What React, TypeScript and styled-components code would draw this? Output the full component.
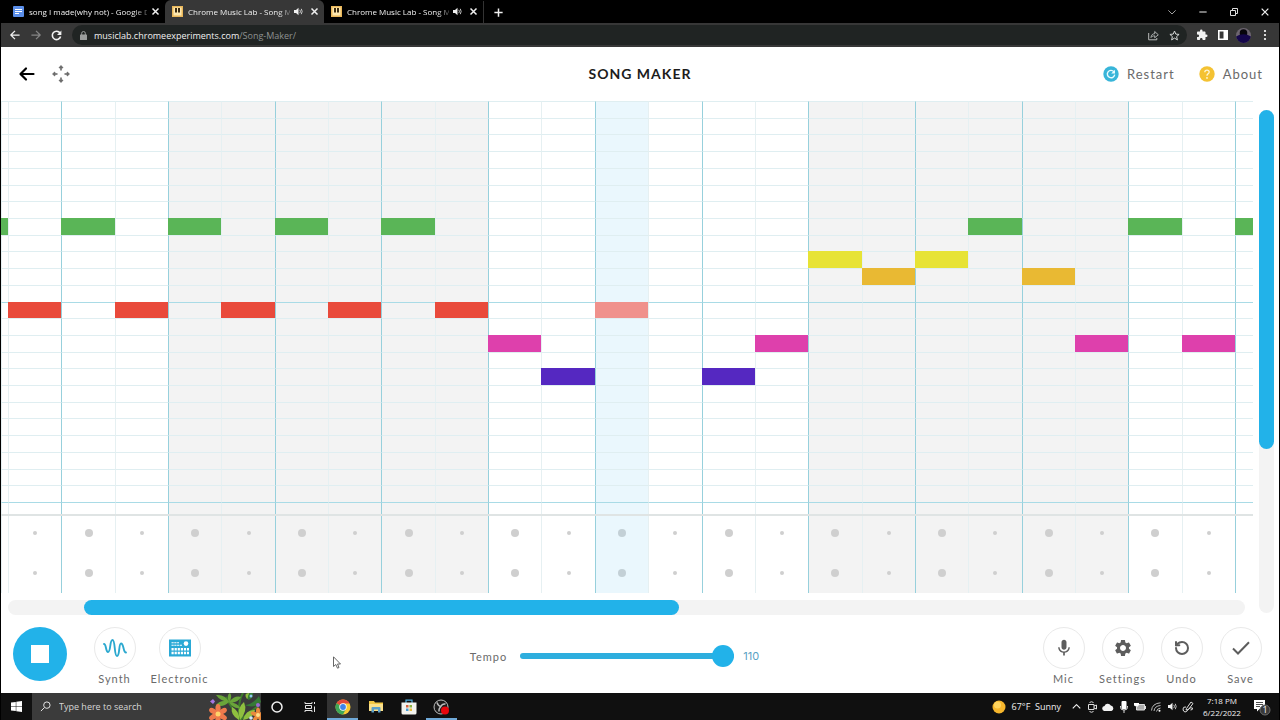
import React, { useState } from 'react';
import styled, { createGlobalStyle, css } from 'styled-components';
import { MdMic, MdSettings, MdExtension } from 'react-icons/md';
import { RotateCcw } from 'lucide-react';

const BLUE = '#22b2e9';

const GlobalStyle = createGlobalStyle`
  * { box-sizing: border-box; }
  body { margin: 0; background: #000; font-family: "Open Sans", sans-serif; }
  button { border: 0; padding: 0; margin: 0; background: none; color: inherit; font: inherit; letter-spacing: inherit; cursor: pointer; }
  a { color: inherit; text-decoration: none; }
  svg { display: block; flex: none; }
`;

const Screen = styled.div`
  display: flex;
  flex-direction: column;
  min-height: 100vh;
  background: #000;
`;

/* ---------- Browser frame ---------- */

const TabStrip = styled.header`
  display: flex;
  align-items: stretch;
  height: 23px;
  padding-left: 6px;
  background: #000;
  color: #f0f0f0;
  font-size: 8px;
`;

const Tab = styled.div<{ $active?: boolean }>`
  display: flex;
  align-items: center;
  width: 159px;
  padding: 0 2px 0 7px;
  border-radius: 6px 6px 0 0;
  background: ${p => (p.$active ? '#373737' : 'transparent')};
`;

const TabTitle = styled.span`
  flex: 1;
  min-width: 0;
  margin-left: 5px;
  white-space: nowrap;
  mask-image: linear-gradient(to right, #000 88%, rgba(0, 0, 0, 0.35));
`;

const TabButton = styled.button`
  display: grid;
  place-items: center;
  width: 16px;
  height: 20px;
`;

const NewTab = styled.button`
  display: grid;
  place-items: center;
  width: 30px;
  margin-top: 1px;
  border-left: 1px solid #333;
`;

const WindowButtons = styled.div`
  display: flex;
  align-items: center;
  margin-left: auto;
`;

const WindowButton = styled.button`
  display: grid;
  place-items: center;
  width: 31px;
  height: 20px;
`;

const Toolbar = styled.nav`
  display: flex;
  align-items: center;
  height: 24px;
  padding: 0 4px 0 3px;
  margin: 0 1px;
  background: #373737;
  color: #f2f2f2;
`;

const ToolButton = styled.button`
  display: grid;
  place-items: center;
  width: 21px;
  height: 22px;
  &:disabled { color: #858585; }
`;

const Omnibox = styled.div`
  display: flex;
  align-items: center;
  flex: 1;
  height: 20px;
  margin: 0 4px 0 5px;
  padding: 0 2px 0 8px;
  border-radius: 10px;
  background: #202423;
  font-size: 9px;
`;

const Url = styled.span`
  flex: 1;
  margin-left: 7px;
  color: #f0f0f0;
  span { color: #8e9291; }
`;

/* ---------- Song Maker ---------- */

const SongMaker = styled.main`
  display: flex;
  flex: 1;
  flex-direction: column;
  margin: 0 1px;
  background: #fff;
  color: #6a6a6a;
  font-family: Lato, sans-serif;
`;

const AppHeader = styled.header`
  display: grid;
  grid-template-columns: 1fr auto 1fr;
  align-items: center;
  height: 54px;
  padding: 0 16px;
`;

const HeaderGroup = styled.div<{ $end?: boolean }>`
  display: flex;
  align-items: center;
  gap: ${p => (p.$end ? '24px' : '14px')};
  justify-content: ${p => (p.$end ? 'flex-end' : 'flex-start')};
`;

const Title = styled.h1`
  margin: 0;
  color: #1c1c1c;
  font-size: 14px;
  font-weight: 700;
  line-height: 18px;
  letter-spacing: 1px;
`;

const HeaderAction = styled.button`
  display: flex;
  align-items: center;
  gap: 8px;
  font-size: 13px;
  line-height: 20px;
  letter-spacing: 1px;
`;

const Workspace = styled.div`
  display: flex;
  flex: 1;
`;

const Composer = styled.section`
  display: flex;
  flex: 1;
  flex-direction: column;
  min-width: 0;
`;

const Roll = styled.div`
  display: grid;
  grid-template-columns: 7px repeat(23, 1fr) 18px;
  flex: 1;
`;

const Column = styled.div<{ $shade: string }>`
  display: grid;
  grid-template-rows: repeat(24, minmax(14px, 1fr)) 12px;
  background: ${p => p.$shade};
`;

const Cell = styled.button<{ $beat: boolean; $octave: boolean; $note?: string }>`
  display: block;
  cursor: cell;
  border-top: 1px solid ${p => (p.$octave ? '#a9dbe6' : '#dfeef1')};
  border-left: 1px solid ${p => (p.$beat ? '#97d0dc' : '#e6f0f2')};
  ${p => p.$note && css`
    background: ${p.$note};
    border-color: ${p.$note};
  `}
`;

const Percussion = styled.div`
  display: grid;
  grid-template-columns: 7px repeat(23, 1fr) 18px;
  border-top: 2px solid #dfe4e4;
`;

const DrumColumn = styled.div<{ $shade: string; $beat: boolean }>`
  display: grid;
  grid-template-rows: 34px 40px;
  gap: 3px;
  overflow: hidden;
  background: ${p => p.$shade};
  border-left: 1px solid ${p => (p.$beat ? '#97d0dc' : '#e6f0f2')};
`;

const DrumCell = styled.button`
  display: grid;
  place-items: center;
`;

const Dot = styled.span<{ $big: boolean; $live: boolean }>`
  width: ${p => (p.$big ? 8 : 4)}px;
  height: ${p => (p.$big ? 8 : 4)}px;
  border-radius: 50%;
  background: ${p => (p.$live ? '#c3d0d6' : '#cfcfcf')};
`;

const HTrack = styled.div`
  display: grid;
  grid-template-columns: 76fr 595fr 566fr;
  height: 15px;
  margin: 7px 8px 6px 7px;
  border-radius: 8px;
  background: #f3f3f3;
`;

const VTrack = styled.div`
  display: grid;
  grid-template-rows: 339fr 164fr;
  width: 15px;
  margin: 9px 5px 8px 6px;
  border-radius: 8px;
  background: #f3f3f3;
`;

const Thumb = styled.div<{ $column?: number }>`
  grid-column: ${p => p.$column ?? 1};
  border-radius: 8px;
  background: ${BLUE};
`;

const Controls = styled.footer`
  display: grid;
  grid-template-columns: 1fr auto 1fr;
  height: 72px;
  padding: 0 9px 0 12px;
`;

const ControlGroup = styled.div<{ $end?: boolean }>`
  display: flex;
  align-items: flex-start;
  padding-top: 6px;
  justify-content: ${p => (p.$end ? 'flex-end' : 'flex-start')};
`;

const StopButton = styled.button`
  display: grid;
  place-items: center;
  width: 54px;
  height: 54px;
  margin-right: 15px;
  border-radius: 50%;
  background: ${BLUE};
  &::before { content: ''; width: 18px; height: 18px; background: #fff; }
`;

const RoundControl = styled.button<{ $width: number }>`
  display: flex;
  flex-direction: column;
  align-items: center;
  gap: 3px;
  width: ${p => p.$width}px;
  font-size: 11px;
  line-height: 14px;
  letter-spacing: 1px;
`;

const Ring = styled.span`
  display: grid;
  place-items: center;
  width: 42px;
  height: 42px;
  border: 1px solid #e9e9e9;
  border-radius: 50%;
  color: #5d5d5d;
`;

const TempoLabel = styled.label`
  display: flex;
  align-items: center;
  gap: 13px;
  margin-right: 54px;
  padding-bottom: 2px;
  font-size: 11px;
  letter-spacing: 1px;
`;

const TempoRange = styled.input`
  appearance: none;
  width: 214px;
  height: 22px;
  margin: 0;
  background: transparent;
  &::-webkit-slider-runnable-track {
    height: 6px;
    border-radius: 3px;
    background: #2eaede;
  }
  &::-webkit-slider-thumb {
    appearance: none;
    width: 22px;
    height: 22px;
    margin-top: -8px;
    border-radius: 50%;
    background: ${BLUE};
  }
`;

const TempoValue = styled.output`
  margin-left: -4px;
  color: #5aa2c4;
  font-family: Inter, sans-serif;
  letter-spacing: 0;
`;

const Pointer = styled.svg`
  position: absolute;
  left: 26%;
  bottom: 51px;
`;

/* ---------- Windows taskbar ---------- */

const Taskbar = styled.footer`
  display: flex;
  align-items: stretch;
  height: 27px;
  margin: 0 1px;
  background: #101010;
  color: #f1f1f1;
`;

const StartButton = styled.button`
  display: grid;
  place-items: center;
  width: 31px;
`;

const SearchBox = styled.label`
  display: flex;
  align-items: center;
  width: 229px;
  padding-left: 8px;
  background: #3b3b3b;
`;

const SearchInput = styled.input`
  flex: 1;
  min-width: 0;
  margin-left: 8px;
  padding: 0;
  border: 0;
  outline: 0;
  background: transparent;
  color: #fff;
  font: 9px "Open Sans", sans-serif;
  &::placeholder { color: #d6d6d6; opacity: 1; }
`;

const TaskButton = styled.button<{ $open?: boolean; $active?: boolean }>`
  display: grid;
  place-items: center;
  width: 31px;
  margin-right: 2px;
  background: ${p => (p.$active ? '#333' : 'transparent')};
  border-bottom: 2px solid ${p => (p.$open ? '#6fa9d8' : 'transparent')};
  border-top: 2px solid transparent;
`;

const Tray = styled.div`
  display: flex;
  align-items: center;
  margin-left: auto;
  font-size: 9px;
`;

const Weather = styled.button`
  display: flex;
  align-items: center;
  gap: 6px;
  margin-right: 7px;
  white-space: pre;
`;

const TrayButton = styled.button`
  display: grid;
  place-items: center;
  width: 16px;
  height: 24px;
`;

const Clock = styled.time`
  width: 46px;
  margin-left: 3px;
  font-size: 8px;
  line-height: 12px;
  text-align: center;
`;

const Notices = styled.button`
  display: grid;
  place-items: center;
  width: 34px;
  height: 27px;
`;

/* ---------- Icons ---------- */

const Line = ({ size, d, width = 2 }: { size: number; d: string; width?: number }) => (
  <svg width={size} height={size} viewBox="0 0 24 24" fill="none" stroke="currentColor"
    strokeWidth={width} strokeLinejoin="round" aria-hidden="true">
    <path d={d} />
  </svg>
);

const CLOSE = 'M4 4L20 20M20 4L4 20';
const LEFT = 'M23 12H2M12 2L2 12L12 22';
const RIGHT = 'M1 12H22M12 2L22 12L12 22';

const DocsIcon = () => (
  <svg width="11" height="11" viewBox="0 0 11 11"><rect width="11" height="11" rx="1" fill="#5b8fea" />
    <path d="M2 3.5H9M2 5.5H9M2 7.5H6" stroke="#fff" /></svg>
);

const LabIcon = () => (
  <svg width="11" height="11" viewBox="0 0 11 11"><rect width="11" height="11" fill="#e9b75a" />
    <rect x="1.500" y="1.500" width="8" height="8" fill="#ffe9b0" /><path d="M3 2H5V6.500H3zM6 2H8V6.500H6z" fill="#3a2a10" /></svg>
);

const SpeakerIcon = () => (
  <svg width="9" height="9" viewBox="0 0 9 9"><path d="M0 3H2L4.500 .8V8.200L2 6H0z" fill="currentColor" />
    <path d="M5.800 2.800Q7 4.500 5.800 6.200M7.300 1.800Q9 4.500 7.300 7.200" fill="none" stroke="currentColor" strokeWidth=".8" /></svg>
);

const ReloadIcon = () => (
  <svg width="11" height="11" viewBox="0 0 11 11"><path d="M9 3A4.2 4.2 0 1 0 9.6 6.5" fill="none" stroke="currentColor" strokeWidth="1.6" />
    <path d="M10.4 .5V5H6z" fill="currentColor" /></svg>
);

const LockIcon = () => (
  <svg width="7" height="9" viewBox="0 0 7 9"><rect y="3.5" width="7" height="5.5" rx=".6" fill="#9a9d9c" />
    <path d="M1.7 4V2.3a1.8 1.8 0 0 1 3.6 0V4" fill="none" stroke="#9a9d9c" /></svg>
);

const ShareIcon = () => (
  <svg width="11" height="11" viewBox="0 0 11 11" fill="none" stroke="#b9bcbb"><path d="M.7 3V9.8H8.8V8" />
    <path d="M3 7.5C3.2 4.8 4.7 3.8 6.7 3.7V1.5L10.3 4.8L6.7 7.8V5.8C5 5.8 4 6.3 3 7.5z" strokeWidth=".9" /></svg>
);

const StarIcon = () => (
  <svg width="11" height="11" viewBox="0 0 11 11" fill="none" stroke="#d5d8d7"><path d="M5.5 1L6.8 4.1L10.1 4.4L7.6 6.6L8.4 9.9L5.5 8.1L2.6 9.9L3.4 6.6L.9 4.4L4.2 4.1z" /></svg>
);

const SidePanelIcon = () => (
  <svg width="10" height="10" viewBox="0 0 10 10"><path d="M.8 .8H9.2V9.2H.8z" fill="none" stroke="#fff" strokeWidth="1.6" />
    <rect x="5.5" width="4.5" height="10" fill="#fff" /></svg>
);

const AvatarIcon = () => (
  <svg width="15" height="15" viewBox="0 0 15 15"><clipPath id="face"><circle cx="7.5" cy="7.5" r="7.5" /></clipPath>
    <g clipPath="url(#face)"><rect width="15" height="15" fill="#6d6570" /><circle cx="7.5" cy="5" r="3.8" fill="#07050b" />
      <path d="M0 15V8.5Q7.5 4 15 8.5V15z" fill="#14064a" /></g></svg>
);

const DotsIcon = () => (
  <svg width="4" height="12" viewBox="0 0 4 12" fill="#fff"><circle cx="2" cy="2" r="1.1" /><circle cx="2" cy="6" r="1.1" /><circle cx="2" cy="10" r="1.1" /></svg>
);

const RestoreIcon = () => (
  <svg width="8" height="8" viewBox="0 0 8 8" fill="none" stroke="#ddd"><path d="M.5 2.5H5.5V7.5H.5zM2.5 2.5V.5H7.5V5.5H5.5" /></svg>
);

const BackIcon = () => (
  <svg width="20" height="16" viewBox="0 0 20 16" fill="none" stroke="#000" strokeWidth="2.2" strokeLinecap="round" strokeLinejoin="round">
    <path d="M16.5 8H4M9 2.5L3.5 8L9 13.5" /></svg>
);

const MoveIcon = () => (
  <svg width="20" height="20" viewBox="0 0 20 20" fill="#6a6a6a" stroke="#6a6a6a" strokeWidth="1.6">
    {[0, 90, 180, 270].map(a => (
      <g key={a} transform={`rotate(${a} 10 10)`}><path d="M10 6.5V3" /><path d="M8 3.8L10 1.6L12 3.8z" strokeWidth="1" /></g>
    ))}
  </svg>
);

const RestartIcon = () => (
  <svg width="16" height="16" viewBox="0 0 16 16"><circle cx="8" cy="8" r="7.7" fill="#38b5d9" />
    <path d="M10.9 5.7A3.7 3.7 0 1 0 11.7 8.6" fill="none" stroke="#e9fbff" strokeWidth="1.4" /><path d="M12 3.8V7.6H8.2z" fill="#e9fbff" /></svg>
);

const AboutIcon = () => (
  <svg width="16" height="16" viewBox="0 0 16 16"><circle cx="8" cy="8" r="7.7" fill="#f4c232" />
    <path d="M5.8 6.2Q5.9 4.1 8 4.1T10.2 6.1Q10.2 7.2 9 7.9Q8 8.5 8 9.7" fill="none" stroke="#fff6d8" strokeWidth="1.3" /><circle cx="8" cy="11.9" r=".9" fill="#fff6d8" /></svg>
);

const SynthIcon = () => (
  <svg width="24" height="20" viewBox="0 0 24 20" fill="none" stroke="#2ba8cf" strokeWidth="1.9" strokeLinecap="round">
    <path d="M1 6C3.500 6 2.500 14 5 14C8 14 6.500 2 9.500 2C12.500 2 11 18 14 18C17 18 15.500 5.500 18 5.500C21 5.500 20 14.500 23 14.500" /></svg>
);

const ElectronicIcon = () => (
  <svg width="22" height="18" viewBox="0 0 22 18"><rect width="22" height="17" y=".5" fill="#2aa9d6" />
    <path d="M2.500 3.700H10M2.500 6.300H13" stroke="#fff" strokeWidth="1.100" strokeDasharray="2.200 .6" />
    <circle cx="17" cy="4.600" r="2.300" fill="#fff" />
    <path d="M2.500 10.300H20M2.500 14H20" stroke="#fff" strokeWidth="2.400" strokeDasharray="2.200 .9" /></svg>
);

const CheckIcon = () => (
  <svg width="18" height="14" viewBox="0 0 18 14" fill="none" stroke="currentColor" strokeWidth="2"><path d="M1 7.500L6 12.500L17 1.200" /></svg>
);

const WindowsIcon = () => (
  <svg width="11" height="11" viewBox="0 0 11 11" fill="#fff"><path d="M0 1.500L4.800 .9V5.200H0zM5.300 .8L11 0V5.200H5.300zM0 5.800H4.800V10.100L0 9.500zM5.300 5.800H11V11L5.300 10.200z" /></svg>
);

const GardenArt = () => (
  <svg width="54" height="27" viewBox="0 0 54 27">
    <path d="M19 4Q24 14 33 27M33 27Q30 10 36 0M33 27Q42 20 51 13" stroke="#3f7d2d" strokeWidth="2" fill="none" />
    <g fill="#6aa53a"><path d="M22 9Q13 8 9 2Q18 1 22 9zM22 9Q16 15 9 12Q14 6 22 9zM22 9Q19 2 23 0Q26 4 22 9zM22 9Q28 2 34 4Q30 11 22 9zM22 9Q31 10 33 15Q26 16 22 9z" /></g>
    <g fill="#8fbf3f"><path d="M32 27Q23 22 25 14Q33 18 32 27zM33 27Q29 15 37 9Q41 18 33 27zM36 27Q39 16 48 17Q47 25 36 27zM40 6Q36 0 42 0Q45 3 40 6z" /></g>
    <path d="M37 12Q45 12 52 3L54 9Q48 16 37 12zM46 0Q46 6 41 7Q40 2 43 0z" fill="#367a35" />
    <g transform="translate(11 21)" fill="#ee7a4c">
      {[0, 60, 120, 180, 240, 300].map(a => <ellipse key={a} cy="-5.500" rx="2.600" ry="4.500" transform={`rotate(${a})`} />)}
      <circle r="2.500" fill="#ffd36a" />
    </g>
    <g transform="translate(51 22)" fill="#e98a3d">
      {[0, 72, 144, 216, 288].map(a => <ellipse key={a} cy="-4" rx="2" ry="3.500" transform={`rotate(${a})`} />)}
      <circle r="2" fill="#ffe08a" />
    </g>
    <path d="M6 6L8 8.500L6 11L3 8.500z" fill="#a576e2" /><circle cx="44" cy="3" r="1.500" fill="#8fc7f2" />
    <circle cx="51" cy="12" r="2" fill="#9b6ad0" /><circle cx="44" cy="25" r="1.800" fill="#cfe8ff" />
  </svg>
);

const TaskViewIcon = () => (
  <svg width="12" height="12" viewBox="0 0 12 12" fill="none" stroke="#e4e4e4"><path d="M1 1V2.500H8V1M1 11V9.500H8V11M1.500 4.500H7.500V7.500H1.500zM10.500 1V3M10.500 5.500V11" /></svg>
);

const ChromeIcon = () => (
  <svg width="16" height="16" viewBox="0 0 16 16"><circle cx="8" cy="8" r="7.500" fill="#f9c932" />
    <path d="M8 8L1.500 4.250A7.500 7.500 0 0 1 14.500 4.250L14.500 4.500H8z" fill="#e3493a" />
    <path d="M8 8L1.500 4.250A7.500 7.500 0 0 0 8 15.500L11 9.800z" fill="#3ea757" />
    <circle cx="8" cy="8" r="3.700" fill="#fff" /><circle cx="8" cy="8" r="2.900" fill="#3f83ea" /></svg>
);

const FolderIcon = () => (
  <svg width="14" height="13" viewBox="0 0 14 13"><path d="M0 1H5L6 2.500H14V11H0z" fill="#f2c744" /><path d="M0 4H14V11H0z" fill="#fbe08a" />
    <path d="M2.500 12.500V8Q2.500 7 3.500 7H10.500Q11.500 7 11.500 8V12.500H9V9.500H5V12.500z" fill="#5c9fc9" /></svg>
);

const StoreIcon = () => (
  <svg width="16" height="16" viewBox="0 0 16 16"><path d="M5 4V1.200H11V4" fill="none" stroke="#53b1e0" strokeWidth="1.200" /><path d="M.5 3.500H15.500V14Q15.500 15.500 14 15.500H2Q.5 15.500 .5 14z" fill="#f3f3ee" />
    <path d="M5 6H7.500V8.500H5z" fill="#d8623f" /><path d="M8.500 6H11V8.500H8.500z" fill="#8ab33f" /><path d="M5 9.500H7.500V12H5z" fill="#4a9fd6" /><path d="M8.500 9.500H11V12H8.500z" fill="#e8ba3c" /></svg>
);

const ObsIcon = () => (
  <svg width="17" height="16" viewBox="0 0 17 16"><circle cx="8" cy="8" r="7" fill="#1b1b1b" stroke="#bdbdbd" />
    <path d="M4 3.500Q5 7 8 7.500M12.500 5Q9 4.500 8 7.500M8 7.500Q5.500 9.500 6 12.500" fill="none" stroke="#bdbdbd" strokeWidth="1.400" /><circle cx="12" cy="11.500" r="4" fill="#e8060c" /></svg>
);

const CameraIcon = () => (
  <svg width="9" height="12" viewBox="0 0 9 12" fill="none" stroke="#ddd"><path d="M1.500 1.500Q3.500 0 5.500 1.500M1.500 10.500Q3.500 12 5.500 10.500M.5 3.500H6V8.500H.5zM6 5L8.500 4V8L6 7" /></svg>
);

const CloudIcon = () => (
  <svg width="12" height="8" viewBox="0 0 12 8"><path d="M3 8A2.500 2.500 0 0 1 2.500 3A3.500 3.500 0 0 1 8.800 2.600A2.800 2.800 0 0 1 9.500 8z" fill="#f2f2f2" /></svg>
);

const TrayMicIcon = () => (
  <svg width="8" height="12" viewBox="0 0 8 12"><rect x="1.500" width="5" height="8" rx="1" fill="#fff" /><path d="M.5 5V6.500Q.5 9 4 9T7.500 6.500V5M4 9V12" fill="none" stroke="#ddd" /></svg>
);

const BatteryIcon = () => (
  <svg width="12" height="9" viewBox="0 0 12 9"><path d="M3 2.500H10.500V8H2.500V5" fill="#aaa" stroke="#ddd" /><path d="M0 1H5V3L3 5L0 3.500z" fill="#fff" /><path d="M11 4H12V7H11z" fill="#ddd" /></svg>
);

const WifiIcon = () => (
  <svg width="10" height="10" viewBox="0 0 10 10" fill="none" stroke="#bbb"><path d="M.5 8.500Q1 1.500 9.500 .8M3 9Q3.500 4 9.500 3.500M5.500 9.500Q6 6.500 9.500 6" /><circle cx="8.500" cy="8.700" r="1" fill="#fff" stroke="none" /></svg>
);

const PenIcon = () => (
  <svg width="12" height="12" viewBox="0 0 12 12" fill="none" stroke="#ddd"><path d="M4.500 7.500L9 1L11 2.500L6.500 8.500L4 9zM4 6Q1 5.500 1 8T3 11Q5 11 6 8.500Q8 6 10.500 7Q11 9 8.500 9" /></svg>
);

const NoticeIcon = () => (
  <svg width="18" height="18" viewBox="0 0 18 18"><path d="M1 2H12V11H6.500L4 13.500V11H1z" fill="#fff" /><path d="M3 4.500H10M3 6.500H10M3 8.500H7" stroke="#222" strokeWidth=".8" />
    <circle cx="12" cy="12" r="5" fill="#383838" stroke="#6b6b6b" /><text x="12" y="15" fontSize="9" textAnchor="middle" fill="#fff">1</text></svg>
);

/* ---------- Song data ---------- */

const ROWS = 25;
const COLUMNS = 25;
const PLAYHEAD = 12;
const PITCH = { green: '#5ab557', yellow: '#e7e335', orange: '#e9b933', red: '#e94a3b', pink: '#de40ac', purple: '#5528c1' };

const initialSong: Record<string, string> = {};
const place = (row: number, color: string, columns: number[]) =>
  columns.forEach(c => { initialSong[`${c}:${row}`] = color; });
place(7, PITCH.green, [0, 2, 4, 6, 8, 19, 22, 24]);
place(9, PITCH.yellow, [16, 18]);
place(10, PITCH.orange, [17, 20]);
place(12, PITCH.red, [1, 3, 5, 7, 9]);
place(12, '#f0918c', [PLAYHEAD]);
place(14, PITCH.pink, [10, 15, 21, 23]);
place(16, PITCH.purple, [11, 14]);

const rowColors = Object.values(PITCH);
const range = (n: number) => Array.from({ length: n }, (_, i) => i);
const isBeat = (c: number) => c % 2 === 0 && c > 0;
const shadeOf = (c: number) =>
  c === PLAYHEAD ? '#eaf7fd' : (c >= 4 && c <= 9) || (c >= 16 && c <= 21) ? '#f3f3f3' : '#fff';

export default function App() {
  const [song, setSong] = useState(initialSong);
  const [tempo, setTempo] = useState(110);

  const toggle = (key: string, row: number) =>
    setSong(s => {
      const next = { ...s };
      if (next[key]) delete next[key];
      else next[key] = rowColors[row % rowColors.length];
      return next;
    });

  return (
    <Screen>
      <GlobalStyle />
      <TabStrip>
        <Tab>
          <DocsIcon /><TabTitle>song I made(why not) - Google D</TabTitle>
          <TabButton aria-label="Close tab"><Line size={9} width={4} d={CLOSE} /></TabButton>
        </Tab>
        {[true, false].map(active => (
          <Tab key={String(active)} $active={active}>
            <LabIcon /><TabTitle>Chrome Music Lab - Song M</TabTitle>
            <TabButton aria-label="Mute tab"><SpeakerIcon /></TabButton>
            <TabButton aria-label="Close tab"><Line size={9} width={4} d={CLOSE} /></TabButton>
          </Tab>
        ))}
        <NewTab aria-label="New tab"><Line size={9} width={4} d="M12 1V23M1 12H23" /></NewTab>
        <WindowButtons>
          <WindowButton aria-label="Search tabs"><Line size={8} width={2} d="M1 7L12 18L23 7" /></WindowButton>
          <WindowButton aria-label="Minimize"><Line size={8} width={3} d="M1 12H23" /></WindowButton>
          <WindowButton aria-label="Restore"><RestoreIcon /></WindowButton>
          <WindowButton aria-label="Close"><Line size={10} width={3} d={CLOSE} /></WindowButton>
        </WindowButtons>
      </TabStrip>
      <Toolbar>
        <ToolButton aria-label="Back"><Line size={10} width={3} d={LEFT} /></ToolButton>
        <ToolButton aria-label="Forward" disabled><Line size={10} width={3} d={RIGHT} /></ToolButton>
        <ToolButton aria-label="Reload"><ReloadIcon /></ToolButton>
        <Omnibox>
          <LockIcon />
          <Url>musiclab.chromeexperiments.com<span>/Song-Maker/</span></Url>
          <ToolButton aria-label="Share"><ShareIcon /></ToolButton>
          <ToolButton aria-label="Bookmark"><StarIcon /></ToolButton>
        </Omnibox>
        <ToolButton aria-label="Extensions"><MdExtension size={12} /></ToolButton>
        <ToolButton aria-label="Side panel"><SidePanelIcon /></ToolButton>
        <ToolButton aria-label="Profile"><AvatarIcon /></ToolButton>
        <ToolButton aria-label="Menu"><DotsIcon /></ToolButton>
      </Toolbar>

      <SongMaker>
        <AppHeader>
          <HeaderGroup>
            <a href="#back" aria-label="Back"><BackIcon /></a>
            <button aria-label="Move"><MoveIcon /></button>
          </HeaderGroup>
          <Title>SONG MAKER</Title>
          <HeaderGroup $end>
            <HeaderAction><RestartIcon />Restart</HeaderAction>
            <HeaderAction><AboutIcon />About</HeaderAction>
          </HeaderGroup>
        </AppHeader>

        <Workspace>
          <Composer>
            <Roll>
              {range(COLUMNS).map(c => (
                <Column key={c} $shade={shadeOf(c)}>
                  {range(ROWS).map(r => {
                    const key = `${c}:${r}`;
                    return (
                      <Cell key={key} aria-label={`Beat ${c + 1}, pitch ${ROWS - r}`} $beat={isBeat(c)}
                        $octave={r === 12 || r === 24} $note={song[key]} onClick={() => toggle(key, r)} />
                    );
                  })}
                </Column>
              ))}
            </Roll>
            <Percussion>
              {range(COLUMNS).map(c => (
                <DrumColumn key={c} $shade={shadeOf(c)} $beat={isBeat(c)}>
                  {[0, 1].map(r => (
                    <DrumCell key={r} aria-label={`Drum ${r + 1}, beat ${c + 1}`}>
                      {c > 0 && c < COLUMNS - 1 && <Dot $big={c % 2 === 0} $live={c === PLAYHEAD} />}
                    </DrumCell>
                  ))}
                </DrumColumn>
              ))}
            </Percussion>
            <HTrack><Thumb $column={2} /></HTrack>
          </Composer>
          <VTrack><Thumb /></VTrack>
        </Workspace>

        <Controls>
          <ControlGroup>
            <StopButton aria-label="Stop" />
            <RoundControl $width={65}><Ring><SynthIcon /></Ring>Synth</RoundControl>
            <RoundControl $width={65}><Ring><ElectronicIcon /></Ring>Electronic</RoundControl>
          </ControlGroup>
          <TempoLabel>
            Tempo
            <TempoRange type="range" min={20} max={110} value={tempo} onChange={e => setTempo(Number(e.target.value))} />
            <TempoValue>{tempo}</TempoValue>
          </TempoLabel>
          <ControlGroup $end>
            <RoundControl $width={59}><Ring><MdMic size={20} /></Ring>Mic</RoundControl>
            <RoundControl $width={59}><Ring><MdSettings size={20} /></Ring>Settings</RoundControl>
            <RoundControl $width={59}><Ring><RotateCcw size={16} strokeWidth={3} /></Ring>Undo</RoundControl>
            <RoundControl $width={59}><Ring><CheckIcon /></Ring>Save</RoundControl>
          </ControlGroup>
        </Controls>
      </SongMaker>
      <Pointer width="8" height="13" viewBox="0 0 8 13"><path d="M.5 .8V10.500L2.800 8.500L4.500 12.200L6 11.500L4.500 8H7.500z" fill="#fff" stroke="#555" strokeWidth=".9" /></Pointer>

      <Taskbar>
        <StartButton aria-label="Start"><WindowsIcon /></StartButton>
        <SearchBox>
          <Line size={11} d="M2 22L9 15M15 2A7 7 0 1 0 15 16A7 7 0 1 0 15 2" />
          <SearchInput aria-label="Search" placeholder="Type here to search" />
          <GardenArt />
        </SearchBox>
        <TaskButton aria-label="Cortana"><Line size={12} width={3} d="M12 2A10 10 0 1 0 12 22A10 10 0 1 0 12 2" /></TaskButton>
        <TaskButton aria-label="Task view"><TaskViewIcon /></TaskButton>
        <TaskButton aria-label="Chrome" $open $active><ChromeIcon /></TaskButton>
        <TaskButton aria-label="File Explorer"><FolderIcon /></TaskButton>
        <TaskButton aria-label="Store"><StoreIcon /></TaskButton>
        <TaskButton aria-label="OBS" $open><ObsIcon /></TaskButton>
        <Tray>
          <Weather>
            <svg width="14" height="14" viewBox="0 0 14 14"><circle cx="7" cy="7" r="6.500" fill="#f6b62c" /><circle cx="5.500" cy="5" r="3.500" fill="#ffd45e" /></svg>
            67°F  Sunny
          </Weather>
          <TrayButton aria-label="Show hidden icons"><Line size={9} width={3} d="M2 17L12 7L22 17" /></TrayButton>
          <TrayButton aria-label="Meet now"><CameraIcon /></TrayButton>
          <TrayButton aria-label="OneDrive"><CloudIcon /></TrayButton>
          <TrayButton aria-label="Microphone"><TrayMicIcon /></TrayButton>
          <TrayButton aria-label="Battery"><BatteryIcon /></TrayButton>
          <TrayButton aria-label="Network"><WifiIcon /></TrayButton>
          <TrayButton aria-label="Volume"><SpeakerIcon /></TrayButton>
          <TrayButton aria-label="Pen"><PenIcon /></TrayButton>
          <Clock>7:18 PM<br />6/22/2022</Clock>
          <Notices aria-label="Notifications"><NoticeIcon /></Notices>
        </Tray>
      </Taskbar>
    </Screen>
  );
}
